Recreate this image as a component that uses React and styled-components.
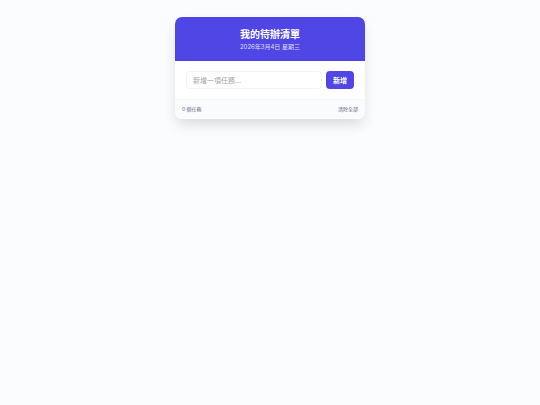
import React from "react";
import styled, { createGlobalStyle } from "styled-components";

const GlobalStyle = createGlobalStyle`
  * {
    box-sizing: border-box;
  }
  body {
    margin: 0;
    background: #fafcfe;
    color: #1e293b;
    font-family: Inter, "Noto Sans CJK TC", sans-serif;
  }
`;

const Page = styled.main`
  display: flex;
  justify-content: center;
  padding: 17px 16px;
`;

const Card = styled.section`
  width: 100%;
  max-width: 190px;
  background: #ffffff;
  border-radius: 7px;
  box-shadow: 0 7px 14px -2px rgba(0, 0, 0, 0.14);
  overflow: hidden;
`;

const Header = styled.header`
  padding: 10px;
  background: #4f46e5;
  color: #ffffff;
  text-align: center;
`;

const Title = styled.h1`
  margin: 0;
  font-size: 10px;
  font-weight: 700;
  line-height: 14px;
`;

const DateText = styled.p`
  margin: 0;
  padding-top: 1px;
  font-size: 6px;
  line-height: 9px;
  opacity: 0.8;
`;

const Form = styled.form`
  display: flex;
  gap: 4px;
  padding: 10px 11px;
`;

const TaskInput = styled.input`
  flex: 1;
  min-width: 0;
  height: 18px;
  padding: 0 6px;
  border: 1px solid #f1f3f6;
  border-radius: 4px;
  font-family: inherit;
  font-size: 7px;
  outline: none;
  &::placeholder {
    color: #a3a3a8;
  }
`;

const AddButton = styled.button`
  height: 18px;
  padding: 0 7px;
  border: none;
  border-radius: 4px;
  background: #4f46e5;
  color: #ffffff;
  font-family: inherit;
  font-size: 7px;
  font-weight: 700;
  cursor: pointer;
`;

const Footer = styled.footer`
  display: flex;
  justify-content: space-between;
  align-items: center;
  padding: 5px 7px 6px;
  border-top: 1px solid #f5f7fa;
  background: #f9fbfd;
  color: #5c6b84;
  font-size: 5px;
  line-height: 8px;
`;

const ClearButton = styled.button`
  padding: 0;
  border: none;
  background: none;
  color: inherit;
  font: inherit;
  cursor: pointer;
`;

export default function App() {
  return (
    <>
      <GlobalStyle />
      <Page>
        <Card>
          <Header>
            <Title>我的待辦清單</Title>
            <DateText>2026年3月4日 星期三</DateText>
          </Header>
          <Form onSubmit={(e) => e.preventDefault()}>
            <TaskInput type="text" placeholder="新增一項任務..." aria-label="新增一項任務" />
            <AddButton type="submit">新增</AddButton>
          </Form>
          <Footer>
            <span>0 個任務</span>
            <ClearButton type="button">清除全部</ClearButton>
          </Footer>
        </Card>
      </Page>
    </>
  );
}
